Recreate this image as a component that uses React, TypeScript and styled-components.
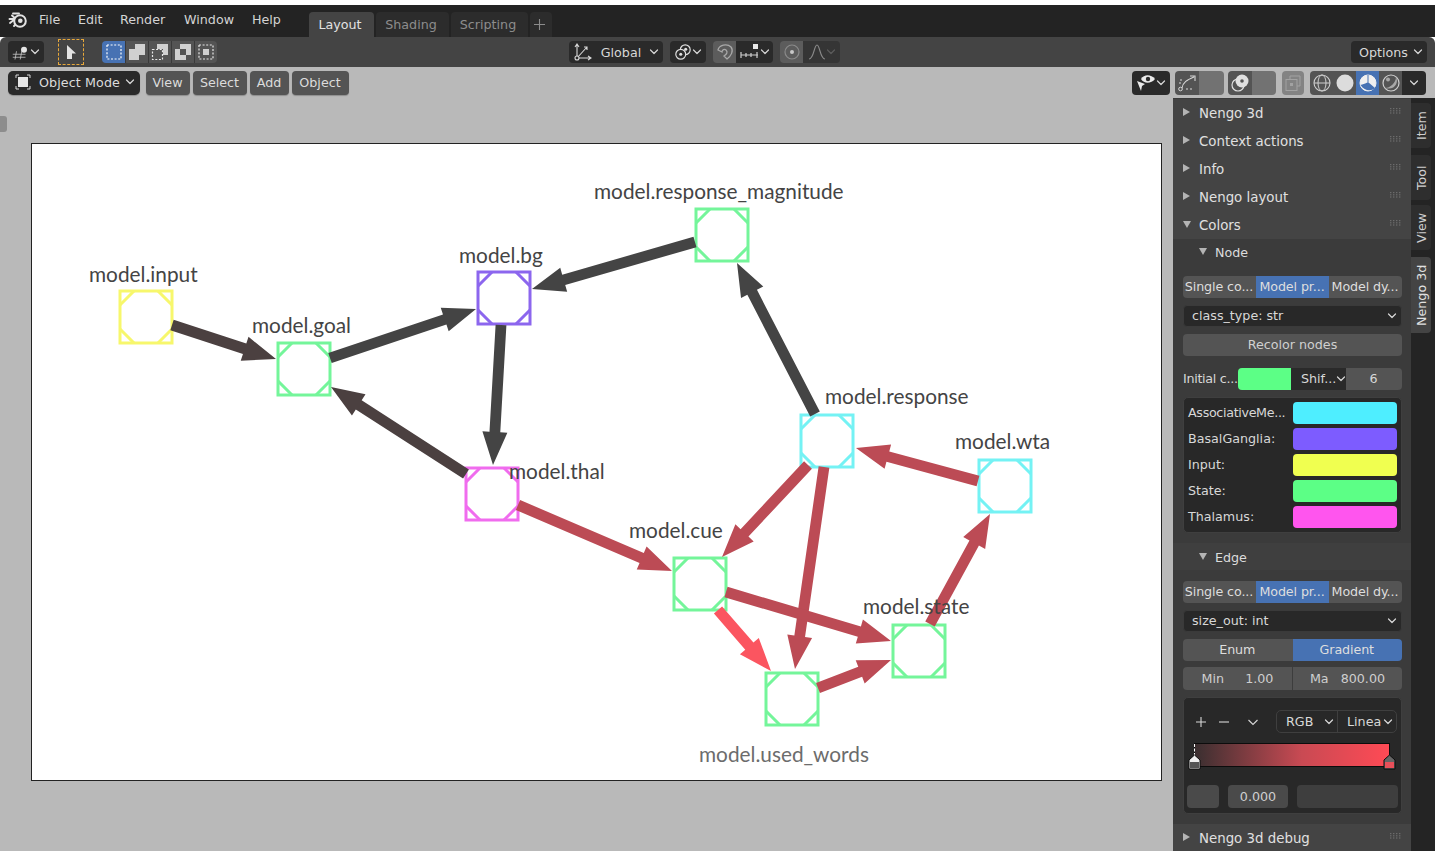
import React from "react";
import styled, { createGlobalStyle, css } from "styled-components";

const Global = createGlobalStyle`
  html, body { margin: 0; padding: 0; background: #fff; }
  #root { width: 100%; }
`;

const Page = styled.div`
  width: 1435px;
  height: 851px;
  padding-top: 5px;
  box-sizing: border-box;
  overflow: hidden;
  background: #fff;
  display: flex;
  flex-direction: column;
  font-family: "DejaVu Sans", sans-serif;
  font-size: 12.7px;
  color: #d8d8d8;
`;

/* ---------- top bar ---------- */
const TopBar = styled.header`
  height: 32px;
  flex: none;
  background: #232323;
  display: flex;
  align-items: flex-end;
  padding-left: 8px;
`;
const Menu = styled.nav`
  display: flex;
  align-self: stretch;
  align-items: center;
  width: 301px;
  flex: none;
  padding-bottom: 3px;
  box-sizing: border-box;
`;
const LogoWrap = styled.div`
  width: 31px;
  flex: none;
  display: flex;
`;
const MenuItem = styled.span<{ $w: number }>`
  width: ${(p) => p.$w}px;
  flex: none;
  color: #d4d4d4;
`;
const Tabs = styled.div`
  display: flex;
  gap: 2px;
`;
const WorkspaceTab = styled.div<{ $active?: boolean; $w: number }>`
  width: ${(p) => p.$w}px;
  height: 25px;
  box-sizing: border-box;
  border-radius: 4px 4px 0 0;
  display: flex;
  align-items: center;
  justify-content: center;
  padding: 0 3px 1px 0;
  background: ${(p) => (p.$active ? "#444444" : "#2c2c2c")};
  color: ${(p) => (p.$active ? "#e2e2e2" : "#8c8c8c")};
`;

/* ---------- tool header ---------- */
const ToolHeader = styled.div`
  height: 30px;
  flex: none;
  background: #444444;
  border-radius: 6px 6px 0 0;
  display: flex;
  align-items: center;
  padding: 0 8px;
  box-sizing: border-box;
`;
const DarkDrop = styled.div<{ $w: number; $ml?: number; $h?: number; $pl?: number }>`
  width: ${(p) => p.$w}px;
  height: ${(p) => p.$h ?? 22}px;
  margin-left: ${(p) => p.$ml ?? 0}px;
  flex: none;
  background: #2a2a2a;
  border-radius: 4px;
  display: flex;
  align-items: center;
  justify-content: space-between;
  padding: 0 4px 0 ${(p) => p.$pl ?? 4}px;
  box-sizing: border-box;
  color: #d8d8d8;
`;
const Dashed = styled.div`
  width: 26px;
  height: 26px;
  margin-left: 14px;
  flex: none;
  box-sizing: border-box;
  border: 1.5px dashed #e8a83a;
  display: flex;
  align-items: center;
  justify-content: center;
`;
const IconGroup = styled.div<{ $ml?: number }>`
  display: flex;
  margin-left: ${(p) => p.$ml ?? 0}px;
  border-radius: 4px;
  overflow: hidden;
  flex: none;
`;
const IconCell = styled.div<{ $w?: number; $bg?: string; $h?: number; $rule?: boolean }>`
  width: ${(p) => p.$w ?? 23}px;
  height: ${(p) => p.$h ?? 22}px;
  background: ${(p) => p.$bg ?? "#545454"};
  display: flex;
  align-items: center;
  justify-content: center;
  box-sizing: border-box;
  ${(p) => p.$rule && css`border-left: 1px solid #3a3a3a;`}
`;
const Spacer = styled.div`
  flex: 1;
`;

/* ---------- viewport ---------- */
const Viewport = styled.main`
  flex: 1;
  min-height: 0;
  background: #b9b9b9;
  display: flex;
  flex-direction: column;
  position: relative;
`;
const ViewHeader = styled.div`
  height: 31px;
  flex: none;
  display: flex;
  align-items: flex-start;
  padding: 4px 9px 0 8px;
  box-sizing: border-box;
`;
const ModeDrop = styled.div`
  width: 132px;
  height: 24px;
  flex: none;
  background: #2a2a2a;
  border-radius: 5px;
  box-shadow: 0 1px 1px #8e8e8e;
  display: flex;
  align-items: center;
  padding: 0 5px 2px 6px;
  box-sizing: border-box;
  justify-content: space-between;
  color: #dcdcdc;
  white-space: nowrap;
`;
const ModeLabel = styled.span`
  margin-left: 2px;
  letter-spacing: 0.1px;
`;
const HeaderButton = styled.div<{ $w: number; $ml: number }>`
  width: ${(p) => p.$w}px;
  height: 24px;
  margin-left: ${(p) => p.$ml}px;
  flex: none;
  background: #545454;
  border-radius: 4px;
  box-shadow: 0 1px 1px #8e8e8e;
  display: flex;
  align-items: center;
  justify-content: center;
  color: #dcdcdc;
  padding: 0 1px 2px 0;
  box-sizing: border-box;
`;
const WorkRow = styled.div`
  flex: 1;
  min-height: 0;
  display: flex;
`;
const Stage = styled.div`
  width: 1173px;
  flex: none;
  padding: 45px 0 0 31px;
  box-sizing: border-box;
`;
const Canvas = styled.svg`
  display: block;
  width: 1131px;
  height: 638px;
  background: #fff;
`;
const Expander = styled.div`
  position: absolute;
  left: 0;
  top: 49px;
  width: 7px;
  height: 16px;
  background: #8d8d8d;
  border-radius: 0 3px 3px 0;
`;

/* ---------- side panel ---------- */
const Sidebar = styled.aside`
  width: 238px;
  flex: none;
  background: #3b3b3b;
  padding-top: 1px;
  box-sizing: border-box;
  display: flex;
  flex-direction: column;
`;
const PanelHeader = styled.div`
  height: 28px;
  flex: none;
  background: #444444;
  display: flex;
  align-items: center;
  padding: 0 9px 0 10px;
  box-sizing: border-box;
  font-size: 13.35px;
  color: #e0e0e0;
  gap: 8px;
`;
const SubHeader = styled.div<{ $bg?: string; $pt?: number }>`
  height: 27px;
  flex: none;
  background: ${(p) => p.$bg ?? "#3f3f3f"};
  display: flex;
  align-items: center;
  padding: ${(p) => p.$pt ?? 0}px 0 0 26px;
  box-sizing: border-box;
  color: #dcdcdc;
  gap: 8px;
`;
const Disclosure = styled.span<{ $open?: boolean }>`
  width: 0;
  height: 0;
  flex: none;
  ${(p) =>
    p.$open
      ? css`
          border-left: 4px solid transparent;
          border-right: 4px solid transparent;
          border-top: 7px solid #b4b4b4;
          margin-bottom: 2px;
        `
      : css`
          border-top: 4px solid transparent;
          border-bottom: 4px solid transparent;
          border-left: 7px solid #b4b4b4;
          margin-right: 1px;
          margin-bottom: 2px;
        `}
`;
const GripSvg = styled.svg`
  margin-left: auto;
  margin-bottom: 4px;
  flex: none;
`;
const Section = styled.div<{ $pt: number; $pb: number }>`
  display: flex;
  flex-direction: column;
  gap: 7px;
  padding: ${(p) => p.$pt}px 9px ${(p) => p.$pb}px 10px;
`;
const Segmented = styled.div<{ $mt?: number; $h?: number }>`
  display: flex;
  height: ${(p) => p.$h ?? 22}px;
  margin-top: ${(p) => p.$mt ?? 0}px;
  border-radius: 4px;
  overflow: hidden;
  flex: none;
`;
const Seg = styled.div<{ $active?: boolean }>`
  flex: 1;
  min-width: 0;
  background: ${(p) => (p.$active ? "#4772b3" : "#545454")};
  color: #dedede;
  display: flex;
  align-items: center;
  justify-content: center;
  white-space: nowrap;
  box-sizing: border-box;
  padding: 0 1px 1px 0;
  letter-spacing: -0.1px;
`;
const Select = styled.div`
  height: 22px;
  flex: none;
  background: #282828;
  border: 1px solid #3a3a3a;
  border-radius: 4px;
  display: flex;
  align-items: center;
  justify-content: space-between;
  padding: 0 4px 1px 8px;
  box-sizing: border-box;
  color: #d8d8d8;
`;
const WideButton = styled.div`
  height: 22px;
  flex: none;
  background: #545454;
  border-radius: 4px;
  display: flex;
  align-items: center;
  justify-content: center;
  color: #d0d0d0;
  padding-bottom: 1px;
  box-sizing: border-box;
`;
const InitRow = styled.div`
  display: flex;
  align-items: center;
  height: 22px;
  margin-top: 5px;
  flex: none;
`;
const InitLabel = styled.span`
  width: 55px;
  flex: none;
  white-space: nowrap;
  margin-bottom: 1px;
  letter-spacing: -0.3px;
`;
const Swatch = styled.div<{ $c: string; $w?: number; $radius?: string }>`
  height: 22px;
  ${(p) => (p.$w ? css`width: ${p.$w}px; flex: none;` : "")}
  background: ${(p) => p.$c};
  border-radius: ${(p) => p.$radius ?? "4px"};
`;
const ShiftDrop = styled.div`
  width: 55px;
  height: 22px;
  flex: none;
  background: #2a2a2a;
  display: flex;
  align-items: center;
  justify-content: space-between;
  padding: 0 3px 1px 10px;
  box-sizing: border-box;
`;
const NumberField = styled.div`
  flex: 1;
  height: 22px;
  background: #545454;
  border-radius: 0 4px 4px 0;
  display: flex;
  align-items: center;
  justify-content: center;
  padding: 0 1px 1px 0;
  box-sizing: border-box;
`;
const ColorBox = styled.div`
  background: #282828;
  border: 1px solid #3f3f3f;
  border-radius: 5px;
  padding: 4px;
  box-sizing: border-box;
  height: 136px;
  flex: none;
  display: grid;
  grid-template-columns: 1fr 104px;
  grid-auto-rows: 22px;
  row-gap: 4px;
  align-items: center;
`;
const BoxLabel = styled.span<{ $tight?: boolean }>`
  margin-bottom: 1px;
  ${(p) => p.$tight && css`letter-spacing: -0.33px;`}
`;
const MinMaxCell = styled.div<{ $rule?: boolean; $gap: number }>`
  flex: 1;
  background: #545454;
  display: flex;
  align-items: center;
  justify-content: center;
  gap: ${(p) => p.$gap}px;
  color: #cfcfcf;
  box-sizing: border-box;
  ${(p) => p.$rule && css`border-left: 1px solid #3d3d3d;`}
`;
const RampBox = styled.div`
  height: 117px;
  flex: none;
  background: #282828;
  border: 1px solid #3f3f3f;
  border-radius: 5px;
  box-sizing: border-box;
  padding: 12px 4px 0 3px;
  display: flex;
  flex-direction: column;
`;
const RampTools = styled.div`
  display: flex;
  align-items: center;
  height: 23px;
  flex: none;
`;
const RampDrops = styled.div`
  margin-left: auto;
  width: 121px;
  height: 23px;
  display: flex;
  border: 1px solid #3f3f3f;
  border-radius: 5px;
  box-sizing: border-box;
`;
const RampDrop = styled.div<{ $w: number; $rule?: boolean }>`
  width: ${(p) => p.$w}px;
  flex: none;
  display: flex;
  align-items: center;
  justify-content: space-between;
  padding: 0 3px 0 9px;
  box-sizing: border-box;
  ${(p) => p.$rule && css`border-left: 1px solid #3f3f3f;`}
`;
const RampBar = styled.div`
  position: relative;
  height: 24px;
  margin: 10px 7px 0 7px;
  flex: none;
  box-sizing: border-box;
  border: 1px solid #0c0c0c;
  background: linear-gradient(90deg, #3a2f30 0%, #c94a53 55%, #ff4a55 100%);
`;
const StopMark = styled.div<{ $side: "left" | "right" }>`
  position: absolute;
  bottom: -4px;
  line-height: 0;
  ${(p) => (p.$side === "left" ? "left: -7px;" : "right: -7px;")}
`;
const DashLine = styled.div`
  position: absolute;
  left: -1px;
  top: 0;
  height: 12px;
  border-left: 1px dashed #fff;
`;
const RampFoot = styled.div`
  display: flex;
  margin-top: 18px;
  height: 23px;
  flex: none;
`;
const FootField = styled.div<{ $w: number; $ml: number; $bg?: string }>`
  width: ${(p) => p.$w}px;
  margin-left: ${(p) => p.$ml}px;
  flex: none;
  background: ${(p) => p.$bg ?? "#4a4a4a"};
  border-radius: 4px;
  display: flex;
  align-items: center;
  justify-content: center;
  color: #d0d0d0;
`;

const TabColumn = styled.div`
  width: 24px;
  flex: none;
  background: #242424;
  display: flex;
  flex-direction: column;
  align-items: flex-start;
  padding-top: 5px;
  box-sizing: border-box;
`;
const SideTab = styled.div<{ $active?: boolean; $h: number; $mt?: number }>`
  width: 20px;
  height: ${(p) => p.$h}px;
  margin-top: ${(p) => p.$mt ?? 0}px;
  flex: none;
  background: ${(p) => (p.$active ? "#444444" : "#2e2e2e")};
  color: ${(p) => (p.$active ? "#e0e0e0" : "#cfcfcf")};
  display: flex;
  align-items: center;
  justify-content: center;
  writing-mode: vertical-rl;
  transform: rotate(180deg);
  border-radius: 4px 0 0 4px;
`;

/* ---------- small icons ---------- */
const Chevron = ({ c = "#d8d8d8" }: { c?: string }) => (
  <svg width="10" height="8" viewBox="0 0 10 8" style={{ flex: "none" }}>
    <path d="M1.5 2 5 5.5 8.5 2" fill="none" stroke={c} strokeWidth="1.2" strokeLinecap="round" strokeLinejoin="round" />
  </svg>
);
const Grip = () => (
  <GripSvg width="12" height="6" viewBox="0 0 12 6">
    {[0, 1, 2].map((r) =>
      [0, 1, 2, 3].map((k) => <rect key={`${r}${k}`} x={k * 3} y={r * 2.2} width="1.4" height="1.2" fill="#6c6c6c" />)
    )}
  </GripSvg>
);
const BlenderLogo = () => (
  <svg width="20" height="18" viewBox="0 0 20 18" style={{ flex: "none" }}>
    <path d="M1.500 8 8 8 4 4.500 M5 2.500 11 2.500 M2 12 7 8 M6 15 10 11" fill="none" stroke="#e2e2e2" strokeWidth="1.900" strokeLinecap="round" strokeLinejoin="round" />
    <circle cx="12" cy="10" r="5.800" fill="#232323" stroke="#e2e2e2" strokeWidth="2" />
    <circle cx="12.300" cy="9.800" r="2.300" fill="#e2e2e2" />
  </svg>
);
const GridIcon = () => (
  <svg width="24" height="20" viewBox="0 0 24 20">
    <path d="M1 13H18 M1 17H18 M6 9 4 20 M13 9 11 20" stroke="#cfcfcf" strokeWidth="1" fill="none" />
    <circle cx="16" cy="7" r="4" fill="#e6e6e6" />
  </svg>
);
const CursorIcon = () => (
  <svg width="14" height="16" viewBox="0 0 14 16">
    <path d="M3 1 12 9.500 8 9.500 8 15 3 15Z" fill="#e4e4e4" />
  </svg>
);
const ModeIcon = ({ kind }: { kind: number }) => {
  const l = "#d0d0d0";
  const dash = { fill: "none", stroke: "#e8e8e8", strokeWidth: 1.2, strokeDasharray: "2 1.6" };
  return (
    <svg width="18" height="18" viewBox="0 0 18 18">
      {kind === 0 && <rect x="2" y="2" width="14" height="14" {...dash} stroke="#fff" />}
      {kind === 1 && <path d="M1 6H7V1H17V12H11V17H1Z" fill={l} />}
      {kind === 2 && (
        <>
          <rect x="1.5" y="6.5" width="10" height="10" {...dash} />
          <path d="M6 1H17V12H12V6H6Z" fill={l} />
        </>
      )}
      {kind === 3 && <path d="M6 1H17V12H12V17H1V6H6ZM6 6V12H12V6Z" fill={l} fillRule="evenodd" />}
      {kind === 4 && (
        <>
          <rect x="2" y="2" width="14" height="14" {...dash} />
          <rect x="6" y="6" width="6" height="6" fill={l} />
        </>
      )}
    </svg>
  );
};
const AxesIcon = () => (
  <svg width="20" height="20" viewBox="0 0 20 20">
    <path d="M4 16V2M2 5 4 2 6 5M4 16H18M15 14 18 16 15 18M4 16 14 5M11 5H14V8" fill="none" stroke="#d8d8d8" strokeWidth="1.100" />
    <circle cx="4" cy="16" r="2" fill="#2a2a2a" stroke="#d8d8d8" strokeWidth="1.100" />
  </svg>
);
const LinkedCircles = () => (
  <svg width="20" height="20" viewBox="0 0 20 20">
    <circle cx="12.500" cy="7.500" r="5.500" fill="none" stroke="#e0e0e0" strokeWidth="1.300" />
    <circle cx="7.500" cy="12.500" r="5.500" fill="#2a2a2a" stroke="#e0e0e0" strokeWidth="1.300" />
    <circle cx="7.500" cy="12.500" r="1.700" fill="#e0e0e0" />
    <circle cx="13" cy="7" r="1.700" fill="#e0e0e0" />
  </svg>
);
const MagnetIcon = () => (
  <svg width="18" height="18" viewBox="0 0 18 18">
    <path d="M2 7C3 2 11 0 15 4 18 8 15 13 11 16L8 13C11 11 12 9 10 7 8.500 5.500 6 7 6 9Z" fill="none" stroke="#a8a8a8" strokeWidth="1.300" />
  </svg>
);
const SnapIcon = () => (
  <svg width="20" height="20" viewBox="0 0 20 20">
    <path d="M1 13H18M1 10V16M6 11V15M11 11V15M17 10V16" fill="none" stroke="#cfcfcf" strokeWidth="1.200" />
    <rect x="13" y="2" width="5" height="5" fill="#e8e8e8" />
  </svg>
);
const PropIcon = () => (
  <svg width="18" height="18" viewBox="0 0 18 18">
    <circle cx="9" cy="9" r="7" fill="none" stroke="#8a8a8a" strokeWidth="1.200" />
    <circle cx="9" cy="9" r="2" fill="#c8c8c8" />
  </svg>
);
const BellIcon = () => (
  <svg width="18" height="18" viewBox="0 0 18 18">
    <path d="M1 16C6 16 6 2 9 2 12 2 12 16 17 16" fill="none" stroke="#8a8a8a" strokeWidth="1.200" />
  </svg>
);
const ObjectModeIcon = () => (
  <svg width="18" height="18" viewBox="0 0 18 18" style={{ flex: "none" }}>
    <path d="M5 2H2V5M13 2H16V5M5 16H2V13M13 16H16V13" fill="none" stroke="#d8d8d8" strokeWidth="1" />
    <rect x="4" y="4" width="10" height="10" fill="#e6e6e6" />
  </svg>
);
const EyeIcon = () => (
  <svg width="20" height="18" viewBox="0 0 20 18">
    <path d="M5 5C8 0 15 0 19 5 15 10 8 10 5 5Z" fill="#eaeaea" />
    <circle cx="12" cy="5" r="2.200" fill="#2a2a2a" />
    <path d="M1 7 9 10 6 12 5 17Z" fill="#eaeaea" />
  </svg>
);
const GizmoIcon = () => (
  <svg width="20" height="20" viewBox="0 0 20 20">
    <path d="M5 15C6 9 10 7 17 4M13 3H18V8M3 7H5M13 16H15M2 10H4M9 16H11" fill="none" stroke="#d8d8d8" strokeWidth="1.100" />
    <circle cx="3.500" cy="16" r="1.800" fill="none" stroke="#d8d8d8" strokeWidth="1" />
  </svg>
);
const OverlayIcon = () => (
  <svg width="20" height="20" viewBox="0 0 20 20">
    <circle cx="8" cy="12" r="6" fill="none" stroke="#e0e0e0" strokeWidth="1.200" />
    <circle cx="12" cy="8" r="6.500" fill="#e0e0e0" />
    <circle cx="12" cy="8" r="1.800" fill="#555" />
  </svg>
);
const XrayIcon = () => (
  <svg width="18" height="18" viewBox="0 0 18 18">
    <path d="M6 5V2H16V12H13" fill="none" stroke="#a2a2a2" strokeWidth="1" />
    <rect x="2" y="5.500" width="11" height="11" fill="none" stroke="#a2a2a2" strokeWidth="1" />
    <rect x="6" y="9" width="3" height="3" fill="#a2a2a2" />
  </svg>
);
const ShadeIcon = ({ kind }: { kind: number }) => (
  <svg width="20" height="20" viewBox="0 0 20 20">
    {kind === 0 && (
      <>
        <circle cx="10" cy="10" r="8" fill="none" stroke="#cfcfcf" strokeWidth="1.100" />
        <ellipse cx="10" cy="10" rx="4" ry="8" fill="none" stroke="#cfcfcf" strokeWidth="1" />
        <path d="M2 10H18" stroke="#cfcfcf" strokeWidth="1" />
      </>
    )}
    {kind === 1 && <circle cx="10" cy="10" r="8.500" fill="#dcdcdc" />}
    {kind === 2 && (
      <>
        <circle cx="10" cy="10" r="8" fill="#f0f0f0" stroke="#f0f0f0" />
        <path d="M2.500 12C6 11 9 10 10 9L17 15C14 18 7 19 2.500 12Z" fill="#4772b3" />
        <path d="M10 2V9" stroke="#4772b3" strokeWidth="1" />
      </>
    )}
    {kind === 3 && (
      <>
        <circle cx="10" cy="10" r="8" fill="none" stroke="#cfcfcf" strokeWidth="1.200" />
        <path d="M4 15C9 15 15 10 15 4 18 9 14 18 4 15Z" fill="#a8a8a8" />
        <circle cx="7" cy="6.500" r="2" fill="#a8a8a8" />
      </>
    )}
  </svg>
);

/* ---------- node graph ---------- */
type Pt = [number, number];
const GREEN = "#74f59a";
const nodes: { x: number; y: number; c: string }[] = [
  { x: 120, y: 291, c: "#f7f76c" },
  { x: 278, y: 343, c: GREEN },
  { x: 478, y: 272, c: "#8c66ee" },
  { x: 696, y: 209, c: GREEN },
  { x: 466, y: 468, c: "#f06cee" },
  { x: 801, y: 415, c: "#74f2f4" },
  { x: 979, y: 460, c: "#74f2f4" },
  { x: 674, y: 558, c: GREEN },
  { x: 893, y: 625, c: GREEN },
  { x: 766, y: 673, c: GREEN },
];
const DARK = "#4b4040";
const GREY = "#444444";
const RED = "#bc4b55";
const edges: { a: Pt; b: Pt; c: string }[] = [
  { a: [172, 325], b: [276, 359], c: DARK },
  { a: [330, 358], b: [476, 309], c: GREY },
  { a: [695, 242], b: [532, 289], c: GREY },
  { a: [501, 325], b: [493, 465], c: GREY },
  { a: [466, 474], b: [331, 387], c: DARK },
  { a: [815, 414], b: [737, 263], c: GREY },
  { a: [518, 505], b: [672, 571], c: RED },
  { a: [808, 465], b: [722, 557], c: RED },
  { a: [824, 467], b: [795, 669], c: RED },
  { a: [978, 481], b: [856, 448], c: RED },
  { a: [930, 624], b: [990, 514], c: RED },
  { a: [726, 592], b: [891, 641], c: RED },
  { a: [718, 610], b: [771, 671], c: "#fb5560" },
  { a: [818, 688], b: [891, 660], c: RED },
];
const labels: { x: number; y: number; t: string; c?: string }[] = [
  { x: 594, y: 199, t: "model.response_magnitude" },
  { x: 89, y: 282, t: "model.input" },
  { x: 252, y: 333, t: "model.goal" },
  { x: 459, y: 263, t: "model.bg" },
  { x: 825, y: 404, t: "model.response" },
  { x: 955, y: 449, t: "model.wta" },
  { x: 509, y: 479, t: "model.thal" },
  { x: 629, y: 538, t: "model.cue" },
  { x: 863, y: 614, t: "model.state" },
  { x: 699, y: 762, t: "model.used_words", c: "#6c6c6c" },
];

const arrowPoints = (a: Pt, b: Pt) => {
  const dx = b[0] - a[0];
  const dy = b[1] - a[1];
  const len = Math.hypot(dx, dy);
  const ux = dx / len;
  const uy = dy / len;
  const nx = -uy;
  const ny = ux;
  const shaft = 5.4;
  const head = 12.5;
  const headLen = 33;
  const bx = b[0] - ux * headLen;
  const by = b[1] - uy * headLen;
  const p: Pt[] = [
    [a[0] + nx * shaft, a[1] + ny * shaft],
    [bx + nx * shaft, by + ny * shaft],
    [bx + nx * head, by + ny * head],
    [b[0], b[1]],
    [bx - nx * head, by - ny * head],
    [bx - nx * shaft, by - ny * shaft],
    [a[0] - nx * shaft, a[1] - ny * shaft],
  ];
  return p.map((q) => q.join(",")).join(" ");
};

const GraphNode = ({ x, y, c }: { x: number; y: number; c: string }) => {
  const s = 52;
  const k = 14;
  return (
    <g fill="none" stroke={c} strokeWidth="3">
      <rect x={x} y={y} width={s} height={s} fill="#fff" />
      <path
        strokeWidth="3"
        d={`M${x + k} ${y}L${x} ${y + k}M${x + s - k} ${y}L${x + s} ${y + k}M${x} ${y + s - k}L${x + k} ${y + s}M${x + s} ${y + s - k}L${x + s - k} ${y + s}`}
      />
    </g>
  );
};

const GraphLabel = styled.text<{ $c?: string }>`
  font-family: "Lato", sans-serif;
  font-size: 20.8px;
  fill: ${(p) => p.$c ?? "#444444"};
`;

const StopIcon = ({ top, body }: { top: string; body: string }) => (
  <svg width="13" height="16" viewBox="0 0 13 16">
    <path d="M1 15V6L6.500 1 12 6V15Z" fill={top} stroke="#0c0c0c" />
    <rect x="2" y="8" width="9" height="6" fill={body} />
  </svg>
);

const MiniLine = styled.svg<{ $ml: number }>`
  margin-left: ${(p) => p.$ml}px;
  flex: none;
`;

export default function App() {
  return (
    <Page>
      <Global />
      <TopBar>
        <Menu>
          <LogoWrap>
            <BlenderLogo />
          </LogoWrap>
          <MenuItem $w={39}>File</MenuItem>
          <MenuItem $w={42}>Edit</MenuItem>
          <MenuItem $w={64}>Render</MenuItem>
          <MenuItem $w={68}>Window</MenuItem>
          <MenuItem $w={40}>Help</MenuItem>
        </Menu>
        <Tabs>
          <WorkspaceTab $active $w={65}>Layout</WorkspaceTab>
          <WorkspaceTab $w={73}>Shading</WorkspaceTab>
          <WorkspaceTab $w={77}>Scripting</WorkspaceTab>
          <WorkspaceTab $w={22}>
            <svg width="13" height="13" viewBox="0 0 13 13">
              <path d="M6.500 1V12M1 6.500H12" stroke="#8c8c8c" strokeWidth="1.100" />
            </svg>
          </WorkspaceTab>
        </Tabs>
      </TopBar>

      <ToolHeader>
        <DarkDrop $w={36}>
          <GridIcon />
          <Chevron />
        </DarkDrop>
        <Dashed>
          <CursorIcon />
        </Dashed>
        <IconGroup $ml={18}>
          <IconCell $bg="#4772b3"><ModeIcon kind={0} /></IconCell>
          <IconCell $rule><ModeIcon kind={1} /></IconCell>
          <IconCell $rule><ModeIcon kind={2} /></IconCell>
          <IconCell $rule><ModeIcon kind={3} /></IconCell>
          <IconCell $rule><ModeIcon kind={4} /></IconCell>
        </IconGroup>
        <DarkDrop $w={94} $ml={352}>
          <AxesIcon />
          <span>Global</span>
          <Chevron />
        </DarkDrop>
        <DarkDrop $w={36} $ml={7}>
          <LinkedCircles />
          <Chevron />
        </DarkDrop>
        <IconGroup $ml={7}>
          <IconCell $w={23} $bg="#5c5c5c"><MagnetIcon /></IconCell>
          <IconCell $w={37} $bg="#2a2a2a">
            <SnapIcon />
            <Chevron />
          </IconCell>
        </IconGroup>
        <IconGroup $ml={7}>
          <IconCell $w={23} $bg="#5c5c5c"><PropIcon /></IconCell>
          <IconCell $w={37} $bg="#353535">
            <BellIcon />
            <Chevron c="#5c5c5c" />
          </IconCell>
        </IconGroup>
        <Spacer />
        <DarkDrop $w={76} $pl={8}>
          <span>Options</span>
          <Chevron />
        </DarkDrop>
      </ToolHeader>

      <Viewport>
        <Expander />
        <ViewHeader>
          <ModeDrop>
            <ObjectModeIcon />
            <ModeLabel>Object Mode</ModeLabel>
            <Chevron />
          </ModeDrop>
          <HeaderButton $w={44} $ml={6}>View</HeaderButton>
          <HeaderButton $w={54} $ml={3}>Select</HeaderButton>
          <HeaderButton $w={39} $ml={3}>Add</HeaderButton>
          <HeaderButton $w={57} $ml={3}>Object</HeaderButton>
          <Spacer />
          <DarkDrop $w={38} $h={24}>
            <EyeIcon />
            <Chevron />
          </DarkDrop>
          <IconGroup $ml={5}>
            <IconCell $h={24} $w={24} $bg="#545454"><GizmoIcon /></IconCell>
            <IconCell $h={24} $w={25} $bg="#727272" />
          </IconGroup>
          <IconGroup $ml={4}>
            <IconCell $h={24} $w={24} $bg="#545454"><OverlayIcon /></IconCell>
            <IconCell $h={24} $w={24} $bg="#727272" />
          </IconGroup>
          <IconGroup $ml={6}>
            <IconCell $h={24} $w={22} $bg="#838383"><XrayIcon /></IconCell>
          </IconGroup>
          <IconGroup $ml={6}>
            <IconCell $h={24} $bg="#545454"><ShadeIcon kind={0} /></IconCell>
            <IconCell $h={24} $bg="#545454"><ShadeIcon kind={1} /></IconCell>
            <IconCell $h={24} $bg="#4772b3"><ShadeIcon kind={2} /></IconCell>
            <IconCell $h={24} $bg="#545454"><ShadeIcon kind={3} /></IconCell>
            <IconCell $h={24} $w={24} $bg="#2a2a2a"><Chevron /></IconCell>
          </IconGroup>
        </ViewHeader>

        <WorkRow>
          <Stage>
            <Canvas viewBox="31 143 1131 638">
              <rect x="31.500" y="143.500" width="1130" height="637" fill="#fff" stroke="#222" strokeWidth="1" />
              {nodes.map((n, i) => (
                <GraphNode key={i} {...n} />
              ))}
              {edges.map((e, i) => (
                <polygon key={i} points={arrowPoints(e.a, e.b)} fill={e.c} />
              ))}
              {labels.map((l) => (
                <GraphLabel key={l.t} x={l.x} y={l.y} $c={l.c}>
                  {l.t}
                </GraphLabel>
              ))}
            </Canvas>
          </Stage>

          <Sidebar>
            {["Nengo 3d", "Context actions", "Info", "Nengo layout"].map((t) => (
              <PanelHeader key={t}>
                <Disclosure />
                <span>{t}</span>
                <Grip />
              </PanelHeader>
            ))}
            <PanelHeader>
              <Disclosure $open />
              <span>Colors</span>
              <Grip />
            </PanelHeader>
            <SubHeader $bg="#3b3b3b">
              <Disclosure $open />
              <span>Node</span>
            </SubHeader>
            <Section $pt={10} $pb={10}>
              <Segmented>
                <Seg>Single co...</Seg>
                <Seg $active>Model pr...</Seg>
                <Seg>Model dy...</Seg>
              </Segmented>
              <Select>
                <span>class_type: str</span>
                <Chevron />
              </Select>
              <WideButton>Recolor nodes</WideButton>
              <InitRow>
                <InitLabel>Initial c...</InitLabel>
                <Swatch $c="#5cff86" $w={53} $radius="4px 0 0 4px" />
                <ShiftDrop>
                  <span>Shif...</span>
                  <Chevron />
                </ShiftDrop>
                <NumberField>6</NumberField>
              </InitRow>
              <ColorBox>
                <BoxLabel $tight>AssociativeMe...</BoxLabel>
                <Swatch $c="#4eeeff" />
                <BoxLabel>BasalGanglia:</BoxLabel>
                <Swatch $c="#7d5cff" />
                <BoxLabel>Input:</BoxLabel>
                <Swatch $c="#f0ff50" />
                <BoxLabel>State:</BoxLabel>
                <Swatch $c="#5cff86" />
                <BoxLabel>Thalamus:</BoxLabel>
                <Swatch $c="#ff55ee" />
              </ColorBox>
            </Section>
            <SubHeader $pt={1}>
              <Disclosure $open />
              <span>Edge</span>
            </SubHeader>
            <Section $pt={11} $pb={10}>
              <Segmented>
                <Seg>Single co...</Seg>
                <Seg $active>Model pr...</Seg>
                <Seg>Model dy...</Seg>
              </Segmented>
              <Select>
                <span>size_out: int</span>
                <Chevron />
              </Select>
              <Segmented>
                <Seg>Enum</Seg>
                <Seg $active>Gradient</Seg>
              </Segmented>
              <Segmented $h={23} $mt={-1}>
                <MinMaxCell $gap={21}>
                  <span>Min</span>
                  <span>1.00</span>
                </MinMaxCell>
                <MinMaxCell $rule $gap={12}>
                  <span>Ma</span>
                  <span>800.00</span>
                </MinMaxCell>
              </Segmented>
              <RampBox>
                <RampTools>
                  <MiniLine $ml={8} width="12" height="12" viewBox="0 0 12 12">
                    <path d="M6 1V11M1 6H11" stroke="#d8d8d8" strokeWidth="1.100" />
                  </MiniLine>
                  <MiniLine $ml={11} width="12" height="12" viewBox="0 0 12 12">
                    <path d="M1 6H11" stroke="#d8d8d8" strokeWidth="1.100" />
                  </MiniLine>
                  <MiniLine $ml={17} width="12" height="10" viewBox="0 0 12 10">
                    <path d="M1.500 3 6 7.500 10.500 3" fill="none" stroke="#d8d8d8" strokeWidth="1.100" />
                  </MiniLine>
                  <RampDrops>
                    <RampDrop $w={60}>
                      <span>RGB</span>
                      <Chevron />
                    </RampDrop>
                    <RampDrop $w={59} $rule>
                      <span>Linea</span>
                      <Chevron />
                    </RampDrop>
                  </RampDrops>
                </RampTools>
                <RampBar>
                  <DashLine />
                  <StopMark $side="left"><StopIcon top="#f0f0f0" body="#555" /></StopMark>
                  <StopMark $side="right"><StopIcon top="#666" body="#e8505a" /></StopMark>
                </RampBar>
                <RampFoot>
                  <FootField $w={32} $ml={0} />
                  <FootField $w={60} $ml={9}>0.000</FootField>
                  <FootField $w={101} $ml={9} $bg="#3e3e3e" />
                </RampFoot>
              </RampBox>
            </Section>
            <PanelHeader>
              <Disclosure />
              <span>Nengo 3d debug</span>
              <Grip />
            </PanelHeader>
          </Sidebar>

          <TabColumn>
            <SideTab $h={45}>Item</SideTab>
            <SideTab $h={45} $mt={7}>Tool</SideTab>
            <SideTab $h={45} $mt={5}>View</SideTab>
            <SideTab $active $h={76} $mt={7}>Nengo 3d</SideTab>
          </TabColumn>
        </WorkRow>
      </Viewport>
    </Page>
  );
}
